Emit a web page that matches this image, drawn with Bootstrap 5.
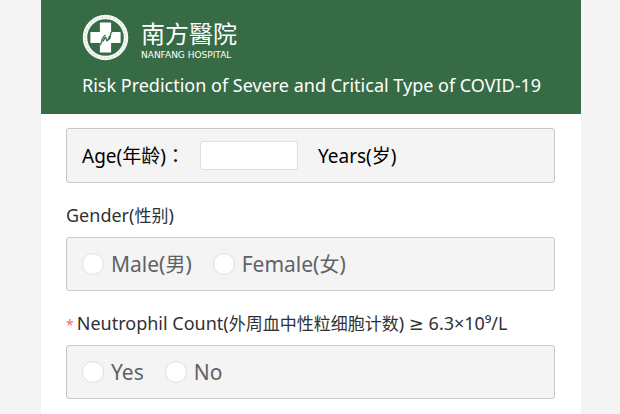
<!DOCTYPE html>
<html lang="en">
<head>
<meta charset="utf-8">
<meta name="viewport" content="width=device-width, initial-scale=1">
<title>Risk Prediction of Severe and Critical Type of COVID-19</title>
<link href="https://cdn.jsdelivr.net/npm/bootstrap@5.3.0/dist/css/bootstrap.min.css" rel="stylesheet">
<style>
body { background: #f4f4f4; color: #303133; font-family: "Noto Sans", "Open Sans", "Noto Sans CJK SC", sans-serif; font-size: 18px; line-height: 24px; }
.sheet { margin: 0 39px 0 41px; min-height: 100vh; }
.masthead { background: #376b45; padding: 14px 25px 17px 41px; }
.masthead h1 { font-size: 18px; line-height: 24px; font-weight: 400; }
.brand { gap: 12px; height: 47px; }
.brand-zh { font-family: "Noto Sans CJK TC", sans-serif; font-size: 24px; line-height: 24px; margin-bottom: 4px; }
.brand-en { font-family: "DejaVu Sans", sans-serif; font-size: 9px; line-height: 12px; }
.form-area { padding: 14px 26px 14px 25px; }
.panel { background: #f4f4f4; border: 1px solid #c8c8c8; border-radius: 3px; padding: 0 15px; min-height: 55px; }
.panel-age { color: #000; font-size: 19px; }
.wide-colon { font-family: "Noto Sans CJK TC", sans-serif; }
.age-box { width: 98px; height: 29px; border: 1px solid #dcdfe6; border-radius: 3px; box-shadow: none; margin: 0 20px 0 15px; }
.question { font-size: 18px; line-height: 24px; margin: 20px 0 10px; }
.question span { line-height: 1; }
.question [lang] { font-size: 17px; }
.question .sign { font-family: "DejaVu Sans", sans-serif; }
.star { color: #f56c6c; font-size: 14px; margin-right: 3px; }
.choices { color: #606266; font-size: 21px; gap: 21px; min-height: 54px; }
.choices [lang] { font-size: 20px; }
.choice { gap: 7px; }
.choice .form-check-input { width: 22px; height: 22px; border-color: #dcdfe6; }
</style>
<script src="https://cdn.jsdelivr.net/npm/bootstrap@5.3.0/dist/js/bootstrap.bundle.min.js"></script>
</head>
<body>
<main class="sheet bg-white">
  <header class="masthead text-white">
    <div class="brand d-flex align-items-end">
      <svg width="47" height="47" viewBox="0 0 47 47" aria-hidden="true">
        <circle cx="23.5" cy="23.5" r="20.5" fill="none" stroke="#f4f8f5" stroke-width="4.5"/>
        <circle cx="23.5" cy="23.5" r="20.5" fill="none" stroke="#c9dacd" stroke-width="1.2" stroke-dasharray="1.5 2.5"/>
        <path d="M18.500 9h10v9.500H38v10h-9.500V38h-10v-9.500H9v-10h9.500z" fill="#fff" stroke="#fff" stroke-width="1.200" stroke-linejoin="round"/>
        <path d="M18 31c2-1 1-4 2.500-6.500 1-2 2-3 3-3.500M21 27.500c1-2.500 2-4 2.700-4s.3 3 1.300 3.300c1.200 0 1.500-3.500 3-4.800M25 26.500c3-1 3.500-3 3.500-5.500 0-1.500.5-3 2-3.500" fill="none" stroke="#376b45" stroke-width="1.300"/>
      </svg>
      <div>
        <div class="brand-zh">南方醫院</div>
        <div class="brand-en">NANFANG HOSPITAL</div>
      </div>
    </div>
    <h1 class="mt-2 mb-0 pt-1">Risk Prediction of Severe and Critical Type of COVID-19</h1>
  </header>
  <form class="form-area">
    <div class="panel panel-age d-flex align-items-center">
      <label for="age">Age(年龄)<span class="wide-colon" lang="zh-Hant">：</span></label>
      <input type="text" id="age" class="age-box form-control" inputmode="numeric">
      <span>Years(岁)</span>
    </div>
    <fieldset>
      <legend class="question">Gender(<span lang="zh-Hans">性别</span>)</legend>
      <div class="panel choices d-flex align-items-center">
        <div class="choice d-flex align-items-center">
          <input class="form-check-input m-0" type="radio" name="gender" id="male"><label for="male">Male(<span lang="zh-Hans">男</span>)</label>
        </div>
        <div class="choice d-flex align-items-center">
          <input class="form-check-input m-0" type="radio" name="gender" id="female"><label for="female">Female(<span lang="zh-Hans">女</span>)</label>
        </div>
      </div>
    </fieldset>
    <fieldset>
      <legend class="question"><span class="star">*</span>Neutrophil Count(<span lang="zh-Hans">外周血中性粒细胞计数</span>) <span class="sign">≥</span> 6.3×10⁹/L</legend>
      <div class="panel choices d-flex align-items-center">
        <div class="choice d-flex align-items-center">
          <input class="form-check-input m-0" type="radio" name="neutrophil" id="yes"><label for="yes">Yes</label>
        </div>
        <div class="choice d-flex align-items-center">
          <input class="form-check-input m-0" type="radio" name="neutrophil" id="no"><label for="no">No</label>
        </div>
      </div>
    </fieldset>
  </form>
</main>
</body>
</html>
